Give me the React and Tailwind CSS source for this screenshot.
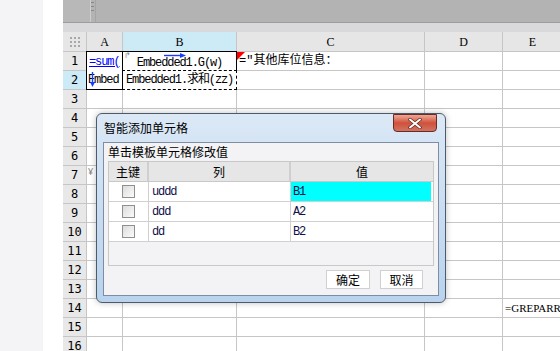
import React from 'react'

const MONO = { fontFamily: '"Liberation Mono", "Noto Sans CJK SC", monospace' }

const COLS = [
  { key: 'A', w: 'w-[36px]' },
  { key: 'B', w: 'w-[114px]' },
  { key: 'C', w: 'w-[188px]' },
  { key: 'D', w: 'w-[78px]' },
  { key: 'E', w: 'w-[60px]' },
]

const ROWS = Array.from({ length: 16 }, (_, i) => i + 1)

function CornerDots() {
  return (
    <div className="grid grid-cols-3 gap-[2px]">
      {Array.from({ length: 9 }).map((_, i) => (
        <div key={i} className="w-[2px] h-[2px] bg-[#a8a8a8]" />
      ))}
    </div>
  )
}

function Checkbox() {
  return <div className="w-[13px] h-[13px] border border-[#8f8f8f] bg-gradient-to-br from-[#dcdcdc] to-[#fbfbfb]" />
}

function CellContent({ row, col }) {
  if (row === 1 && col === 'A')
    return (
      <span className="pl-[2px] text-[12px] tracking-[-1.1px] text-[#0000ff] underline" style={MONO}>=sum(</span>
    )
  if (row === 1 && col === 'B')
    return (
      <div className="relative w-full h-full flex items-center justify-center">
        <span className="text-[#888] text-[8px] absolute left-[1px] top-[-3px]">↱</span>
        <svg className="absolute left-[41px] top-[1px]" width="22" height="5" viewBox="0 0 22 5">
          <path d="M0 2.5H18" stroke="#1a3cff" strokeWidth="1.4" />
          <path d="M16 0L22 2.5L16 5Z" fill="#1a3cff" />
        </svg>
        <span className="text-[12px] tracking-[-1.1px] text-black pt-[2px]" style={MONO}>Embedded1.G(w)</span>
      </div>
    )
  if (row === 1 && col === 'C')
    return (
      <div className="relative w-full h-full flex items-center">
        <svg className="absolute left-0 top-0" width="8" height="8" viewBox="0 0 8 8">
          <path d="M0 0H8L0 8Z" fill="#ff0000" />
        </svg>
        <span className="pl-[2px] text-[12px] text-black whitespace-nowrap" style={MONO}>="其他库位信息：</span>
      </div>
    )
  if (row === 2 && col === 'A')
    return (
      <div className="relative w-full h-full flex items-center overflow-hidden">
        <svg className="absolute left-[3px] top-[1px]" width="5" height="15" viewBox="0 0 5 15">
          <path d="M2.5 0V11" stroke="#1a3cff" strokeWidth="1.4" />
          <path d="M0 10L2.5 15L5 10Z" fill="#1a3cff" />
        </svg>
        <span className="pl-[1px] text-[12px] tracking-[-1.1px] text-black whitespace-nowrap" style={MONO}>Embed</span>
      </div>
    )
  if (row === 2 && col === 'B')
    return (
      <span className="pl-[3px] text-[12px] tracking-[-1.1px] text-black whitespace-nowrap" style={MONO}>Embedded1.求和(zz)</span>
    )
  if (row === 14 && col === 'E')
    return (
      <span className="pl-[2px] text-[11px] text-black whitespace-nowrap" style={{ fontFamily: '"Liberation Serif", serif' }}>=GREPARRA</span>
    )
  return null
}

function Sheet() {
  return (
    <div className="flex-1 flex flex-col overflow-hidden bg-white">
      {/* toolbar */}
      <div className="h-[23px] shrink-0 flex border-b border-[#9c9c9c] bg-[#b3b3b3]">
        <div className="w-[27px] bg-[#b8b8b8]" />
        <div className="w-[5px] border-l border-[#cfcfcf] flex flex-col gap-[3px] pt-[2px]">
          <div className="w-[3px] h-px bg-[#888]" />
          <div className="w-[3px] h-px bg-[#888]" />
          <div className="w-[3px] h-px bg-[#888]" />
        </div>
        <div className="flex-1 border-l border-[#a5a5a5]" />
      </div>
      <div className="h-[9px] shrink-0 bg-[#d9d9db]" />

      {/* column header */}
      <div className="flex h-[20px] shrink-0 bg-[#e6e6e6] border-b border-[#c6c6c6]">
        <div className="w-[24px] shrink-0 flex items-center justify-center border-r border-[#c6c6c6]">
          <CornerDots />
        </div>
        {COLS.map((c) => (
          <div
            key={c.key}
            className={`${c.w} shrink-0 flex items-center justify-center border-r border-[#c6c6c6] text-[12px] text-black ${c.key === 'B' ? 'bg-[#cdeaf7]' : ''}`}
            style={{ fontFamily: '"Liberation Serif", serif' }}
          >
            {c.key}
          </div>
        ))}
      </div>

      {/* rows */}
      {ROWS.map((r) => (
        <div key={r} className="flex h-[19px] shrink-0">
          <div
            className={`w-[24px] shrink-0 flex items-center justify-center border-r border-b border-[#c6c6c6] text-[12px] text-black ${r === 2 ? 'bg-[#cdeaf7]' : 'bg-[#e8e8e8]'}`}
            style={{ fontFamily: '"DejaVu Sans Mono", monospace' }}
          >
            {r}
          </div>
          {COLS.map((c) => {
            let extra = 'border-r border-b border-[#c6c6c6]'
            if (c.key === 'A' && r === 1) extra = 'border-t border-l border-r border-black -mt-px -ml-px w-[37px]'
            if (c.key === 'A' && r === 2) extra = 'border-l border-r border-b border-black -ml-px w-[37px]'
            if (c.key === 'B' && r === 1) extra = 'border-t border-r border-black -mt-px'
            if (c.key === 'B' && r === 2) extra = 'border border-dashed border-black -mt-px -ml-px w-[115px] h-[20px]'
            return (
              <div key={c.key} className={`${c.w} shrink-0 flex items-center overflow-visible ${extra}`}>
                <CellContent row={r} col={c.key} />
              </div>
            )
          })}
        </div>
      ))}
    </div>
  )
}

function Dialog() {
  const CJK = { fontFamily: '"Noto Sans CJK SC", sans-serif' }
  const rows = [
    { col: 'uddd', val: 'B1', hl: true },
    { col: 'ddd', val: 'A2' },
    { col: 'dd', val: 'B2' },
  ]
  return (
    <div className="absolute left-[96px] top-[113px] w-[350px] h-[190px] rounded-[6px] border border-[#4d5a69] bg-gradient-to-b from-[#dbe8f6] via-[#c9ddf2] to-[#b9d3ee] flex flex-col shadow-[0_0_6px_rgba(0,0,0,0.25)]">
      {/* title bar */}
      <div className="h-[28px] flex items-start relative">
        <span className="pl-[7px] pt-[5px] text-[12px] text-black" style={CJK}>智能添加单元格</span>
        <div className="absolute right-[8px] top-[0px] w-[44px] h-[18px] rounded-b-[4px] border border-[#6b2a22] bg-gradient-to-b from-[#eba898] via-[#d0503a] to-[#cf7463] flex items-center justify-center">
          <svg width="14" height="11" viewBox="0 0 14 11">
            <path d="M2 1.5L12 9.5M12 1.5L2 9.5" stroke="#5a2a22" strokeWidth="3.4" strokeLinecap="round" />
            <path d="M2 1.5L12 9.5M12 1.5L2 9.5" stroke="#ffffff" strokeWidth="2" strokeLinecap="round" />
          </svg>
        </div>
      </div>
      {/* client */}
      <div className="mx-[6px] mb-[6px] flex-1 border border-[#7e8ea0] bg-[#f3f3f5] flex flex-col px-[4px]">
        <div className="h-[18px] flex items-center text-[12px] text-black" style={CJK}>单击模板单元格修改值</div>
        <div className="h-[105px] border border-[#c8c8c8] bg-[#f3f3f5] flex flex-col">
          <div className="flex h-[20px] bg-[#e6e6e6] border-b border-[#c8c8c8] text-[12px] text-black" style={CJK}>
            <div className="w-[40px] flex items-center justify-center border-r-2 border-[#cfcfcf]">主键</div>
            <div className="w-[142px] flex items-center justify-center border-r-2 border-[#cfcfcf]">列</div>
            <div className="flex-1 flex items-center justify-center">值</div>
          </div>
          {rows.map((row) => (
            <div key={row.col} className="flex h-[20px] bg-white border-b border-[#d0d0d0] text-[12px] tracking-[-1.1px] text-[#10104a]" style={MONO}>
              <div className="w-[40px] flex items-center justify-center border-r border-[#d0d0d0]">
                <Checkbox />
              </div>
              <div className="w-[142px] flex items-center pl-[3px] border-r border-[#d0d0d0]">{row.col}</div>
              <div className={`flex-1 flex items-center pl-[2px] mr-[2px] ${row.hl ? 'bg-[#00ffff]' : ''}`}>{row.val}</div>
            </div>
          ))}
        </div>
        <div className="flex justify-end gap-[10px] pt-[4px] pr-[11px]">
          <button className="w-[44px] h-[19px] bg-white border border-[#d0d0d0] text-[12px] text-black flex items-center justify-center" style={CJK}>确定</button>
          <button className="w-[43px] h-[19px] bg-white border border-[#d0d0d0] text-[12px] text-black flex items-center justify-center" style={CJK}>取消</button>
        </div>
      </div>
    </div>
  )
}

export default function App() {
  return (
    <div className="relative w-[560px] h-[351px] overflow-hidden flex bg-white">
      <div className="w-[43px] bg-[#f4f4f6]" />
      <div className="w-[20px] bg-white" />
      <Sheet />
      <span className="absolute left-[88px] top-[165px] text-[9px] text-[#888]">¥</span>
      <Dialog />
    </div>
  )
}
